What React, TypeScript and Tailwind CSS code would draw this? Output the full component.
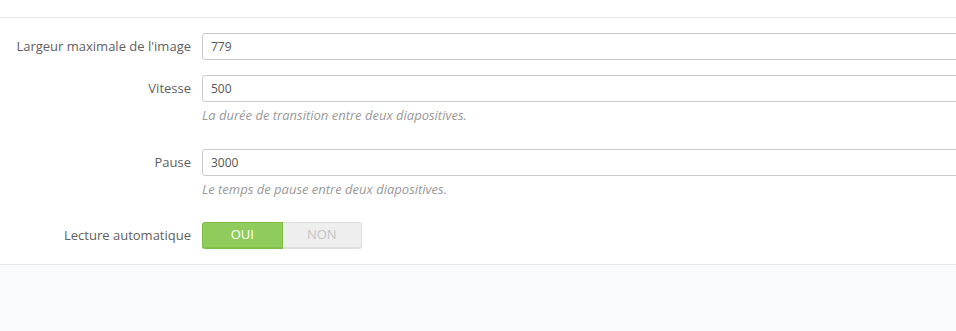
import React from "react";

function Row({ label, children, help, className = "" }: { label: string; children: React.ReactNode; help?: string; className?: string }) {
  return (
    <div className={"flex " + className}>
      <label className="w-[202px] shrink-0 pr-[11px] text-right text-[13px] leading-[27px] text-[#5f5f5f]">{label}</label>
      <div className="flex flex-col">
        {children}
        {help && <p className="mt-[5px] text-[13px] italic leading-[17px] text-[#999]">{help}</p>}
      </div>
    </div>
  );
}

function Input({ value }: { value: string }) {
  return (
    <input
      readOnly
      value={value}
      className="h-[27px] w-[800px] rounded-[3px] border border-[#ccc] bg-white px-[8px] text-[12px] text-[#555] outline-none"
    />
  );
}

export default function App() {
  return (
    <div className="h-[331px] w-[956px] overflow-hidden bg-[#fafbfd]" style={{ fontFamily: '"Open Sans", sans-serif' }}>
      <div className="h-[17px] bg-white" />
      <div className="border-y border-[#e9e9e9] bg-white pb-[15px] pt-[15px]">
        <Row label="Largeur maximale de l'image">
          <Input value="779" />
        </Row>
        <Row label="Vitesse" help="La durée de transition entre deux diapositives." className="mt-[15px]">
          <Input value="500" />
        </Row>
        <Row label="Pause" help="Le temps de pause entre deux diapositives." className="mt-[25px]">
          <Input value="3000" />
        </Row>
        <Row label="Lecture automatique" className="mt-[24px]">
          <div className="flex h-[27px] w-[160px] rounded-[3px]">
            <div className="flex flex-1 items-center justify-center rounded-l-[3px] border border-b-2 border-[#7fbf48] bg-[#8fcc5b] text-[13px] text-white">OUI</div>
            <div className="flex flex-1 items-center justify-center rounded-r-[3px] border border-b-2 border-l-0 border-[#dedede] bg-[#eeeeee] text-[13px] text-[#c4c4c4]">NON</div>
          </div>
        </Row>
      </div>
    </div>
  );
}
